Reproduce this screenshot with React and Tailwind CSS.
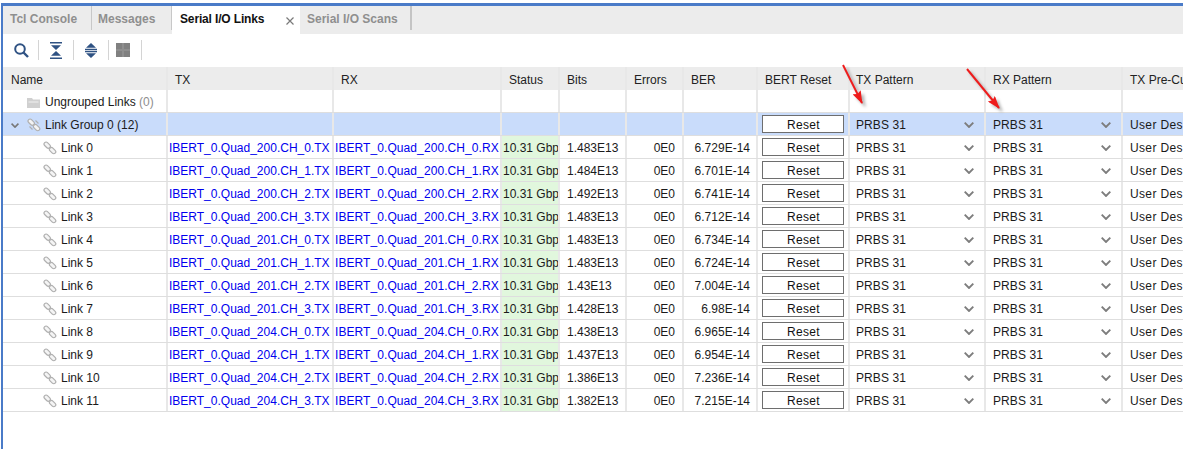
import React from 'react';

const links = [
  ['Link 0', '200', 0, '1.483E13', '6.729E-14'],
  ['Link 1', '200', 1, '1.484E13', '6.701E-14'],
  ['Link 2', '200', 2, '1.492E13', '6.741E-14'],
  ['Link 3', '200', 3, '1.483E13', '6.712E-14'],
  ['Link 4', '201', 0, '1.483E13', '6.734E-14'],
  ['Link 5', '201', 1, '1.483E13', '6.724E-14'],
  ['Link 6', '201', 2, '1.43E13', '7.004E-14'],
  ['Link 7', '201', 3, '1.428E13', '6.98E-14'],
  ['Link 8', '204', 0, '1.438E13', '6.965E-14'],
  ['Link 9', '204', 1, '1.437E13', '6.954E-14'],
  ['Link 10', '204', 2, '1.386E13', '7.236E-14'],
  ['Link 11', '204', 3, '1.382E13', '7.215E-14'],
];

const cell = 'h-full shrink-0 overflow-hidden whitespace-nowrap border-r-2 border-[#e8e8e8]';
const textCell = `${cell} pt-[2px]`;
const row = 'flex h-[23px] items-stretch border-b border-[#dedede]';
const col = {
  name: 'w-[165px]',
  tx: 'w-[166px]',
  rx: 'w-[168px]',
  status: 'w-[58px]',
  bits: 'w-[67px]',
  errors: 'w-[57px]',
  ber: 'w-[74px]',
  reset: 'w-[92px]',
  txp: 'w-[136px]',
  rxp: 'w-[137px]',
};

const LinkIcon = ({ double }) => (
  <svg width="14" height="14" viewBox="0 0 14 14" fill="none" stroke="#b0b0b0" strokeWidth="1.2" className="shrink-0">
    <rect x="-3.6" y="-2" width="7.2" height="4" rx="2" transform="translate(4.2 4.2) rotate(45)" fill="#f4f4f4" />
    <rect x="-3.6" y="-2" width="7.2" height="4" rx="2" transform="translate(9.6 9.6) rotate(45)" fill="#f4f4f4" />
    {double && <path d="M2.5 8.5l3 3M8.5 2.5l3 3" />}
  </svg>
);

const Chevron = ({ w = 10, h = 6, color = '#7d7d7d' }) => (
  <svg width={w} height={h} viewBox="0 0 10 6" preserveAspectRatio="none" fill="none" stroke={color} strokeWidth="1.9" className="shrink-0">
    <path d="M0.7 0.7L5 5L9.3 0.7" />
  </svg>
);

const PatternCell = ({ width, left }) => (
  <div className={`${textCell} ${width} ${left} flex items-center justify-between pr-[10px] tracking-[0.1px]`}>
    <span>PRBS 31</span>
    <Chevron />
  </div>
);

const ResetCell = () => (
  <div className={`${cell} ${col.reset} flex items-center pl-[4px]`}>
    <button className="flex h-[18px] w-[82px] items-center justify-center border border-[#6e6e6e] bg-white pl-px pt-px text-[12px] tracking-[0.3px] text-[#111]">
      Reset
    </button>
  </div>
);

const UserDes = () => <div className="flex items-center whitespace-nowrap pl-[7px] pt-[2px] tracking-[0.35px]">User Des</div>;

const Arrow = ({ left, top, w, h, x1, y1, x2, y2 }) => (
  <svg
    className="absolute drop-shadow-[3px_3px_1.5px_rgba(0,0,0,0.3)]"
    style={{ left, top }}
    width={w}
    height={h}
    viewBox={`0 0 ${w} ${h}`}
  >
    <defs>
      <marker id={`head${left}`} markerWidth="13" markerHeight="9" refX="12" refY="4.5" orient="auto" markerUnits="userSpaceOnUse">
        <path d="M0 0L13 4.5L0 9L2 4.5z" fill="#ee1c1c" />
      </marker>
    </defs>
    <line x1={x1} y1={y1} x2={x2} y2={y2} stroke="#ee1c1c" strokeWidth="2" markerEnd={`url(#head${left})`} />
  </svg>
);

const Tab = ({ label, width, pad, divider }) => (
  <div className={`flex h-[24px] shrink-0 items-center pt-px font-bold text-[#8f8f8f] ${width} ${pad} ${divider}`}>{label}</div>
);

const Divider = ({ ml }) => <div className={`h-[20px] w-px shrink-0 bg-[#d4d4d4] ${ml}`} />;

export default function App() {
  return (
    <div
      className="relative h-[449px] w-[1183px] overflow-hidden bg-white pl-px pt-[3px] text-[12px] text-[#1a1a1a]"
      style={{ fontFamily: '"Liberation Sans", Arial, sans-serif' }}
    >
      <div className="h-[446px] border-l-2 border-t-[3px] border-[#4a7bc8]">
        {/* Tabs */}
        <div className="flex h-[28px] items-start bg-[#ececec]">
          <Tab label="Tcl Console" width="w-[89px]" pad="pl-[7px]" divider="border-r border-[#c8c8c8]" />
          <Tab label="Messages" width="w-[80px]" pad="pl-[6px]" divider="border-r border-[#c8c8c8]" />
          <div className="relative flex h-[28px] w-[128px] shrink-0 items-center bg-white pb-[2px] pl-[8px] font-bold tracking-[-0.15px] text-[#111]">
            Serial I/O Links
            <svg className="absolute right-[6px] top-[11px]" width="8" height="8" viewBox="0 0 8 8" stroke="#7a7a7a" strokeWidth="1.2">
              <path d="M0.5 0.5l7 7M7.5 0.5l-7 7" />
            </svg>
          </div>
          <Tab label="Serial I/O Scans" width="w-[112px]" pad="pl-[7px]" divider="border-r-2 border-[#c4c4c4]" />
        </div>

        {/* Toolbar */}
        <div className="flex h-[32px] items-center pl-[11px]">
          <svg width="15" height="15" viewBox="0 0 15 15" fill="none" stroke="#2f5283" strokeWidth="2" className="shrink-0">
            <circle cx="6" cy="6" r="4.8" />
            <path d="M9.5 9.5l4.5 4.5" strokeWidth="2.4" />
          </svg>
          <Divider ml="ml-[9px]" />
          <svg width="12" height="17" viewBox="0 0 12 17" fill="#2f5283" className="ml-[11px] shrink-0">
            <path d="M0 0h12v1.6H0zM0 15.4h12V17H0zM1 3.2h10L6 8zM1 13.8h10L6 9z" />
          </svg>
          <Divider ml="ml-[11px]" />
          <svg width="12" height="15" viewBox="0 0 12 15" fill="#2f5283" className="ml-[11px] shrink-0">
            <path d="M6 0l5 4.8H1zM6 15l-5-4.8h10zM0 5.8h12v1.4H0zM0 8h12v1.3H0z" />
          </svg>
          <Divider ml="ml-[11px]" />
          <div className="relative ml-[7px] h-[14px] w-[14px] shrink-0 bg-[#808080]">
            <div className="absolute left-[6px] top-0 h-full w-[2px] bg-[#8e8e8e]" />
            <div className="absolute left-0 top-[6px] h-[2px] w-full bg-[#8e8e8e]" />
          </div>
          <Divider ml="ml-[11px]" />
        </div>

        {/* Table header */}
        <div className="mt-px flex h-[23px] items-stretch bg-[#ececec]">
          {[
            ['Name', col.name, 'pl-[8px]'],
            ['TX', col.tx, 'pl-[7px]'],
            ['RX', col.rx, 'pl-[7px]'],
            ['Status', col.status, 'pl-[7px]'],
            ['Bits', col.bits, 'pl-[7px]'],
            ['Errors', col.errors, 'pl-[7px]'],
            ['BER', col.ber, 'pl-[7px]'],
            ['BERT Reset', col.reset, 'pl-[7px]'],
            ['TX Pattern', col.txp, 'pl-[6px]'],
            ['RX Pattern', col.rxp, 'pl-[7px]'],
          ].map(([label, width, pad]) => (
            <div key={label} className={`${textCell} ${width} ${pad} flex items-center text-[#222]`}>
              {label}
            </div>
          ))}
          <div className="flex items-center whitespace-nowrap pl-[7px] pt-[2px] text-[#222]">TX Pre-Cu</div>
        </div>

        {/* Ungrouped row */}
        <div className={`${row} bg-white`}>
          <div className={`${textCell} ${col.name} flex items-center gap-[5px] pl-[24px]`}>
            <svg width="13" height="11" viewBox="0 0 13 11" fill="#d0d0d0" className="shrink-0">
              <path d="M0 1h5l1 1.5h7V11H0z" />
              <path d="M1.5 4.5h10v1h-10z" fill="#f0f0f0" />
            </svg>
            <span>Ungrouped Links <span className="text-[#8e8e8e]">(0)</span></span>
          </div>
          {[col.tx, col.rx, col.status, col.bits, col.errors, col.ber, col.reset, col.txp, col.rxp].map((width) => (
            <div key={width} className={`${cell} ${width}`} />
          ))}
        </div>

        {/* Group row */}
        <div className={`${row} bg-[#c9dcfb]`}>
          <div className={`${textCell} ${col.name} flex items-center pl-[8px]`}>
            <Chevron w={8} h={5} color="#777" />
            <div className="ml-[8px] mr-[4px]"><LinkIcon double /></div>
            <span>Link Group 0 (12)</span>
          </div>
          {[col.tx, col.rx, col.status, col.bits, col.errors, col.ber].map((width) => (
            <div key={width} className={`${cell} ${width}`} />
          ))}
          <ResetCell />
          <PatternCell width={col.txp} left="pl-[6px]" />
          <PatternCell width={col.rxp} left="pl-[7px]" />
          <UserDes />
        </div>

        {/* Link rows */}
        {links.map(([name, quad, ch, bits, ber]) => (
          <div key={name} className={`${row} bg-white`}>
            <div className={`${textCell} ${col.name} flex items-center gap-[4px] pl-[40px]`}>
              <LinkIcon />
              <span>{name}</span>
            </div>
            <div className={`${textCell} ${col.tx} flex items-center pl-px text-[#0000ee]`}>IBERT_0.Quad_{quad}.CH_{ch}.TX</div>
            <div className={`${textCell} ${col.rx} flex items-center pl-px tracking-[0.08px] text-[#0000ee]`}>IBERT_0.Quad_{quad}.CH_{ch}.RX</div>
            <div className={`${cell} ${col.status} flex items-stretch`}>
              <div className="flex w-full items-center overflow-hidden bg-[#e1f7dd] pl-px pt-[2px]">10.31 Gbp</div>
            </div>
            <div className={`${textCell} ${col.bits} flex items-center pl-[7px]`}>{bits}</div>
            <div className={`${textCell} ${col.errors} flex items-center justify-end pr-[7px]`}>0E0</div>
            <div className={`${textCell} ${col.ber} flex items-center justify-end pr-[6px]`}>{ber}</div>
            <ResetCell />
            <PatternCell width={col.txp} left="pl-[6px]" />
            <PatternCell width={col.rxp} left="pl-[7px]" />
            <UserDes />
          </div>
        ))}
      </div>

      {/* Red annotation arrows */}
      <Arrow left={838} top={60} w={40} h={55} x1={5} y1={5} x2={24} y2={43} />
      <Arrow left={962} top={64} w={50} h={55} x1={5} y1={5} x2={37} y2={44} />
    </div>
  );
}
